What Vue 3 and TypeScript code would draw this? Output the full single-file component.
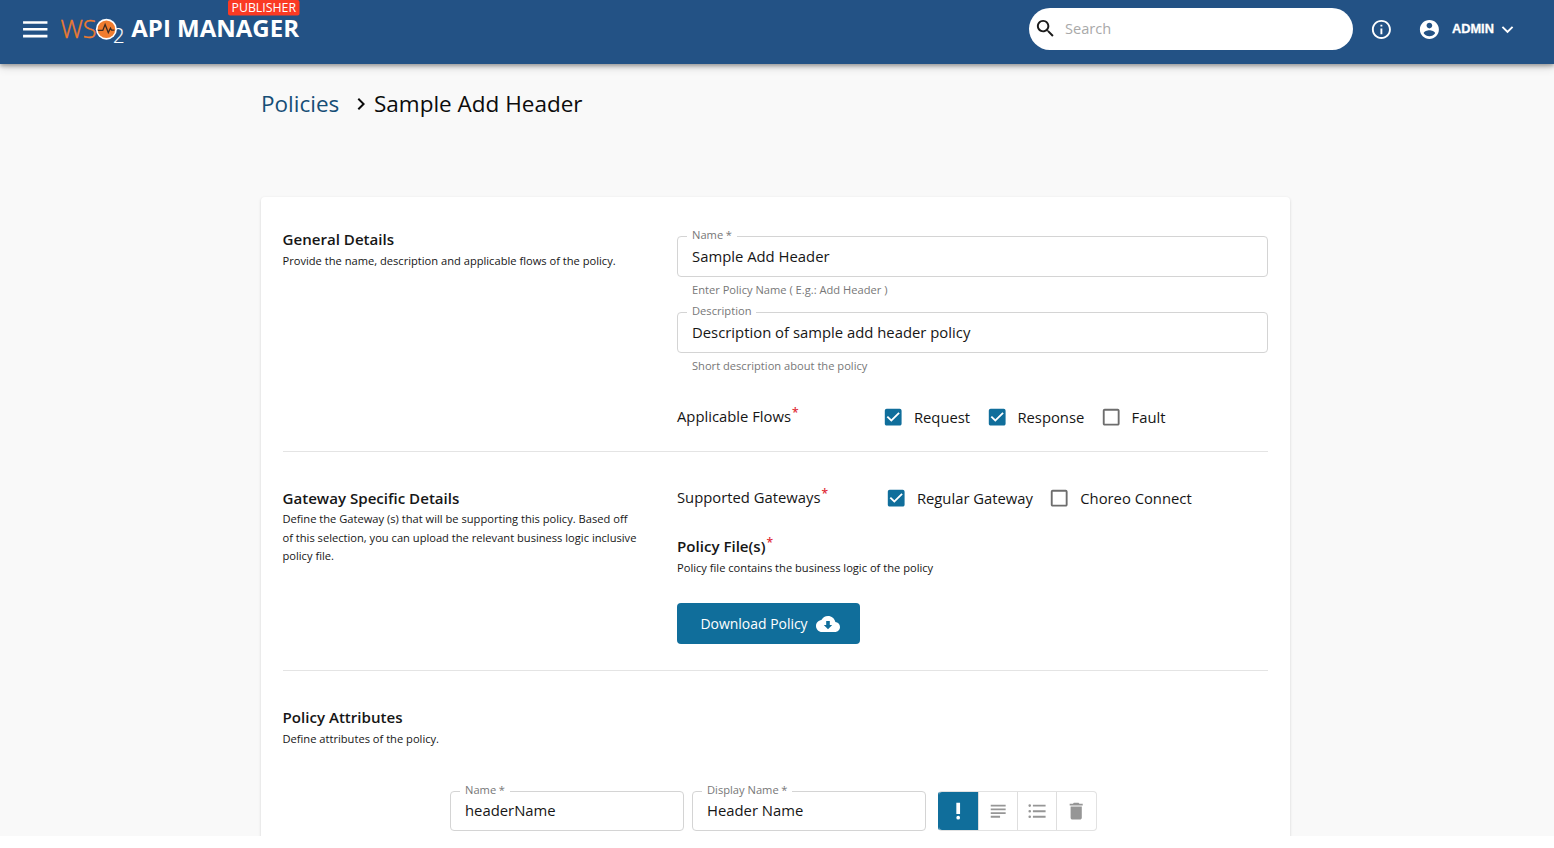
<script setup lang="ts">
import { ref } from 'vue'

interface Option {
  label: string
  checked: boolean
}

const paths = {
  menu: 'M3 18h18v-2H3v2zm0-5h18v-2H3v2zm0-7v2h18V6H3z',
  search:
    'M15.5 14h-.79l-.28-.27C15.41 12.59 16 11.11 16 9.5 16 5.91 13.09 3 9.5 3S3 5.91 3 9.5 5.91 16 9.5 16c1.61 0 3.09-.59 4.23-1.57l.27.28v.79l5 4.99L20.49 19l-4.99-5zm-6 0C7.01 14 5 11.99 5 9.5S7.01 5 9.5 5 14 7.01 14 9.5 11.99 14 9.5 14z',
  info: 'M11 7h2v2h-2zm0 4h2v6h-2zm1-9C6.48 2 2 6.48 2 12s4.48 10 10 10 10-4.48 10-10S17.52 2 12 2zm0 18c-4.41 0-8-3.59-8-8s3.59-8 8-8 8 3.59 8 8-3.59 8-8 8z',
  account:
    'M12 2C6.48 2 2 6.48 2 12s4.48 10 10 10 10-4.48 10-10S17.52 2 12 2zm0 3c1.66 0 3 1.34 3 3s-1.34 3-3 3-3-1.34-3-3 1.34-3 3-3zm0 14.2c-2.5 0-4.71-1.28-6-3.22.03-1.99 4-3.08 6-3.08 1.99 0 5.97 1.09 6 3.08-1.29 1.94-3.5 3.22-6 3.22z',
  down: 'M16.59 8.59L12 13.17 7.41 8.59 6 10l6 6 6-6z',
  right: 'M10 6 8.59 7.41 13.17 12l-4.58 4.59L10 18l6-6z',
  checked:
    'M19 3H5c-1.11 0-2 .9-2 2v14c0 1.1.89 2 2 2h14c1.11 0 2-.9 2-2V5c0-1.1-.89-2-2-2zm-9 14l-5-5 1.41-1.41L10 14.17l7.59-7.59L19 8l-9 9z',
  unchecked:
    'M19 5v14H5V5h14m0-2H5c-1.1 0-2 .9-2 2v14c0 1.1.9 2 2 2h14c1.1 0 2-.9 2-2V5c0-1.1-.9-2-2-2z',
  cloud:
    'M19.35 10.04C18.67 6.59 15.64 4 12 4 9.11 4 6.6 5.64 5.35 8.04 2.34 8.36 0 10.91 0 14c0 3.31 2.69 6 6 6h13c2.76 0 5-2.24 5-5 0-2.64-2.05-4.78-4.65-4.96zM16.2 13l-4.2 4.2L7.8 13h2.4V9h3.6v4h2.4z',
  required: 'M10 3h4v12h-4zM12 17a2 2 0 1 0 0 4 2 2 0 0 0 0-4z',
  notes: 'M14 17H4v2h10v-2zm6-8H4v2h16V9zM4 15h16v-2H4v2zM4 5v2h16V5z',
  list: 'M7.4 5H21v2H7.4zM7.4 11H21v2H7.4zM7.4 17H21v2H7.4zM4 4.6a1.4 1.4 0 1 0 0 2.8 1.4 1.4 0 0 0 0-2.8zM4 10.6a1.4 1.4 0 1 0 0 2.8 1.4 1.4 0 0 0 0-2.8zM4 16.6a1.4 1.4 0 1 0 0 2.8 1.4 1.4 0 0 0 0-2.8z',
  trash: 'M6 19c0 1.1.9 2 2 2h8c1.1 0 2-.9 2-2V7H6v12zM19 4h-3.5l-1-1h-5l-1 1H5v2h14V4z',
}

const flows = ref<Option[]>([
  { label: 'Request', checked: true },
  { label: 'Response', checked: true },
  { label: 'Fault', checked: false },
])
const gateways = ref<Option[]>([
  { label: 'Regular Gateway', checked: true },
  { label: 'Choreo Connect', checked: false },
])
</script>

<template>
  <div class="page">
    <header class="bar">
      <svg class="menu" viewBox="0 0 24 24"><path :d="paths.menu" /></svg>
      <svg class="brand" viewBox="0 0 246 48">
        <text class="thin orange" x="0.5" y="38" font-size="25.4" textLength="36" lengthAdjust="spacingAndGlyphs">WS</text>
        <text class="thin two" x="53" y="43.3" font-size="20.5" textLength="11.5" lengthAdjust="spacingAndGlyphs">2</text>
        <circle cx="46.4" cy="29.2" r="10.5" fill="#fff" />
        <circle cx="46.4" cy="29.2" r="8.8" fill="#f07c2e" />
        <path d="M37.8 30.4h5l2.3-5.8 3.2 8 2.2-4.4 1.1 2h2.8" fill="none" stroke="#3a2a22" stroke-width="1.3" />
        <text class="bold white" x="71.3" y="37.3" font-size="24" textLength="167.7" lengthAdjust="spacingAndGlyphs">API MANAGER</text>
        <rect x="168" y="0" width="71.5" height="15.5" rx="2" fill="#fa3a24" />
        <text class="white" x="171.5" y="11.9" font-size="12" textLength="64.5" lengthAdjust="spacingAndGlyphs">PUBLISHER</text>
      </svg>
      <div class="search">
        <svg viewBox="0 0 24 24"><path :d="paths.search" /></svg>
        <span>Search</span>
      </div>
      <svg class="info" viewBox="0 0 24 24"><path :d="paths.info" /></svg>
      <svg class="account" viewBox="0 0 24 24"><path :d="paths.account" /></svg>
      <span class="admin">ADMIN</span>
      <svg class="down" viewBox="0 0 24 24"><path :d="paths.down" /></svg>
    </header>

    <nav class="crumbs">
      <a>Policies</a>
      <svg viewBox="0 0 24 24"><path :d="paths.right" /></svg>
      <span>Sample Add Header</span>
    </nav>

    <main class="card">
      <section class="general">
        <div class="side">
          <h2>General Details</h2>
          <p>Provide the name, description and applicable flows of the policy.</p>
        </div>
        <div class="content">
          <div class="field">
            <label>Name<i>*</i></label>
            <span>Sample Add Header</span>
          </div>
          <p class="help">Enter Policy Name ( E.g.: Add Header )</p>
          <div class="field">
            <label>Description</label>
            <span>Description of sample add header policy</span>
          </div>
          <p class="help">Short description about the policy</p>
          <div class="choice">
            <span class="choice-label">Applicable Flows<sup>*</sup></span>
            <span v-for="o in flows" :key="o.label" class="option" @click="o.checked = !o.checked">
              <svg :class="{ on: o.checked }" viewBox="0 0 24 24">
                <path :d="o.checked ? paths.checked : paths.unchecked" />
              </svg>
              {{ o.label }}
            </span>
          </div>
        </div>
      </section>

      <section class="gateway">
        <div class="side">
          <h2>Gateway Specific Details</h2>
          <p>
            Define the Gateway (s) that will be supporting this policy. Based off<br />
            of this selection, you can upload the relevant business logic inclusive<br />
            policy file.
          </p>
        </div>
        <div class="content">
          <div class="choice wide">
            <span class="choice-label">Supported Gateways<sup>*</sup></span>
            <span v-for="o in gateways" :key="o.label" class="option" @click="o.checked = !o.checked">
              <svg :class="{ on: o.checked }" viewBox="0 0 24 24">
                <path :d="o.checked ? paths.checked : paths.unchecked" />
              </svg>
              {{ o.label }}
            </span>
          </div>
          <h2 class="files">Policy File(s)<sup>*</sup></h2>
          <p>Policy file contains the business logic of the policy</p>
          <button class="download">
            Download Policy
            <svg viewBox="0 0 24 24"><path :d="paths.cloud" /></svg>
          </button>
        </div>
      </section>

      <section class="attributes">
        <h2>Policy Attributes</h2>
        <p>Define attributes of the policy.</p>
        <div class="row">
          <div class="field small">
            <label>Name<i>*</i></label>
            <span>headerName</span>
          </div>
          <div class="field small">
            <label>Display Name<i>*</i></label>
            <span>Header Name</span>
          </div>
          <div class="tools">
            <span class="tool active"><svg viewBox="0 0 24 24"><path :d="paths.required" /></svg></span>
            <span class="tool"><svg viewBox="0 0 24 24"><path :d="paths.notes" /></svg></span>
            <span class="tool"><svg viewBox="0 0 24 24"><path :d="paths.list" /></svg></span>
            <span class="tool"><svg viewBox="0 0 24 24"><path :d="paths.trash" /></svg></span>
          </div>
        </div>
      </section>
    </main>
  </div>
</template>

<style>
html,
body {
  background: #fff;
  overflow: hidden;
}
</style>

<style scoped>
* {
  box-sizing: border-box;
}
.page {
  width: 1554px;
  height: 836px;
  overflow: hidden;
  background: #f9f9f9;
  font-family: 'Open Sans', 'Noto Sans', sans-serif;
  color: #161616;
}
svg {
  fill: currentColor;
  flex: none;
  display: block;
}
h2,
p {
  margin: 0;
}
.bar {
  position: relative;
  height: 63.5px;
  display: flex;
  align-items: flex-start;
  background: #235285;
  color: #fff;
  box-shadow: 0 2px 4px rgba(0, 0, 0, 0.3), 0 3px 9px rgba(0, 0, 0, 0.16);
}
.menu {
  width: 32.5px;
  height: 32.5px;
  margin: 13px 0 0 18.8px;
}
.brand {
  width: 246px;
  height: 48px;
  margin-left: 8.7px;
}
.brand .thin {
  font-weight: 300;
}
.brand .bold {
  font-weight: 700;
}
.brand .orange {
  fill: #f07c2e;
  stroke: #f07c2e;
  stroke-width: 0.4px;
}
.brand .white,
.brand .two {
  fill: #fff;
}
.brand .two {
  stroke: #fff;
  stroke-width: 0.2px;
}
.search {
  width: 324px;
  height: 42.5px;
  margin: 7.7px 0 0 723px;
  padding-left: 5px;
  border-radius: 22px;
  background: #fff;
  display: flex;
  align-items: center;
  font-size: 14.6px;
  color: #a9a9a9;
}
.search span {
  margin-top: -2px;
}
.search svg {
  width: 23px;
  height: 23px;
  margin-right: 8px;
  color: #1a1a1a;
}
.info {
  width: 22.8px;
  height: 22.8px;
  margin: 17.7px 0 0 17.5px;
}
.account {
  width: 22.8px;
  height: 22.8px;
  margin: 17.7px 0 0 25.2px;
}
.admin {
  width: 43px;
  margin: 21px 0 0 10.7px;
  font: 700 12.8px/16px 'Liberation Sans', sans-serif;
  -webkit-text-stroke: 0.3px #fff;
}
.down {
  width: 23px;
  height: 23px;
  margin: 17.7px 0 0 1.3px;
}
.crumbs {
  height: 133.5px;
  padding: 24px 0 0 261px;
  display: flex;
  align-items: flex-start;
  font-size: 22.5px;
  line-height: 31px;
  color: #0c0c0c;
}
.crumbs a {
  width: 88px;
  color: #164e76;
}
.crumbs svg {
  width: 24px;
  height: 24px;
  margin: 4px 1px 0 0;
}
.card {
  width: 1029px;
  height: 700px;
  margin-left: 261px;
  padding: 0 22px 0 21.5px;
  border-radius: 4px;
  background: #fff;
  box-shadow: 0 1px 3px rgba(0, 0, 0, 0.16);
}
section {
  border-bottom: 1px solid #e4e4e4;
}
.general,
.gateway {
  display: flex;
}
.general {
  height: 254.6px;
  padding-top: 30.5px;
}
.gateway {
  height: 219.4px;
  padding-top: 35px;
}
.attributes {
  padding-top: 35px;
  border: 0;
}
.side {
  width: 394.5px;
}
.content {
  width: 591px;
}
h2 {
  font-size: 15.1px;
  line-height: 22px;
  font-weight: 600;
}
p {
  font-size: 11.13px;
  line-height: 18.5px;
  padding-top: 2px;
  white-space: nowrap;
}
.gateway .side p,
.attributes p {
  padding-top: 1.7px;
}
.field {
  position: relative;
  height: 41px;
  border: 1.5px solid #d4d4d4;
  border-radius: 4px;
  padding-left: 14px;
  font-size: 14.85px;
  line-height: 39px;
}
.general .content {
  padding-top: 8.5px;
}
.field label {
  position: absolute;
  left: 9px;
  top: -11px;
  padding: 0 5px;
  background: #fff;
  font-size: 11.15px;
  line-height: 18px;
  color: #777;
}
.field label i {
  font-style: normal;
  margin-left: 2.5px;
}
.help {
  height: 35px;
  padding: 4.4px 0 0 15px;
  color: #777;
}
.choice {
  display: flex;
  align-items: flex-start;
  font-size: 14.8px;
  line-height: 22px;
}
.general .choice {
  margin-top: 17px;
}
.choice-label {
  width: 205px;
  white-space: nowrap;
}
.wide .choice-label {
  width: 208px;
}
sup {
  color: #e02b36;
  font-size: 12px;
  font-weight: 600;
  line-height: 0;
  vertical-align: 5px;
  margin-left: 1px;
}
.option {
  display: flex;
  margin: 1.3px 15.4px 0 0;
}
.option svg {
  width: 22.4px;
  height: 22.4px;
  margin-right: 9.5px;
  color: #6d6d6d;
}
.option svg.on {
  color: #106e9b;
}
.gateway .content {
  margin-top: -1px;
}
.files {
  margin-top: 25.3px;
}
.download {
  display: flex;
  align-items: center;
  width: 183px;
  height: 41.5px;
  margin-top: 25.7px;
  padding: 0 0 0 23.5px;
  border: 0;
  border-radius: 4px;
  background: #106e9b;
  color: #fff;
  font: 500 13.95px/22px 'Open Sans', sans-serif;
  white-space: nowrap;
}
.download svg {
  width: 24px;
  height: 24px;
  margin-left: 8.5px;
}
.row {
  display: flex;
  margin: 42.8px 0 0 167.5px;
}
.small {
  width: 234px;
  height: 40px;
  margin-right: 8px;
  line-height: 37px;
}
.tools {
  display: flex;
  width: 158.5px;
  height: 40px;
  margin-left: 4px;
  border: 1px solid #e2e2e2;
  border-left-color: #106e9b;
  border-radius: 4px;
  overflow: hidden;
}
.tool {
  width: 39.2px;
  flex: none;
  display: flex;
  align-items: center;
  justify-content: center;
  color: #969696;
}
.tool + .tool {
  border-left: 1px solid #dedede;
}
.tools .active {
  width: 40px;
  margin: -1px 0 -1px -1px;
  background: #106e9b;
  color: #fff;
}
.tool svg {
  width: 22.4px;
  height: 22.4px;
}
</style>
